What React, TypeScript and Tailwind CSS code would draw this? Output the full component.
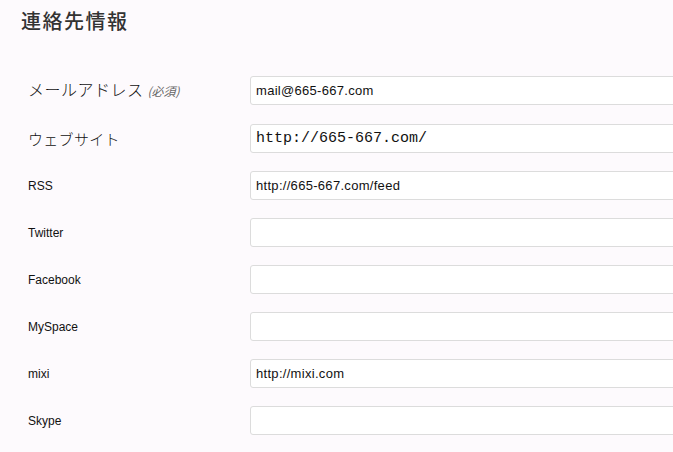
import React from "react";

type Field = {
  label: string;
  note?: string;
  big?: boolean;
  value?: string;
  mono?: boolean;
};

const FIELDS: Field[] = [
  { label: "メールアドレス", note: "(必須)", big: true, value: "mail@665-667.com" },
  { label: "ウェブサイト", big: true, value: "http://665-667.com/", mono: true },
  { label: "RSS", value: "http://665-667.com/feed" },
  { label: "Twitter" },
  { label: "Facebook" },
  { label: "MySpace" },
  { label: "mixi", value: "http://mixi.com" },
  { label: "Skype" },
];

export default function App() {
  return (
    <div className="min-h-screen w-full overflow-hidden bg-[#fdfafd] font-['Liberation_Sans','Noto_Sans_CJK_JP',sans-serif] text-[#222]">
      <h2 className="pl-[21px] pt-[8px] text-[20px] leading-[26px] font-medium text-[#333] tracking-[1.5px] font-['Noto_Sans_CJK_JP',sans-serif]">
        連絡先情報
      </h2>

      <div className="mt-[33px] pl-[28px] flex flex-col">
        {FIELDS.map((f, i) => (
          <div
            key={f.label}
            className={`flex items-center shrink-0 ${i === 1 ? "h-[48px]" : "h-[47px]"}`}
          >
            <div className="w-[222px] shrink-0 flex items-baseline">
              {f.big ? (
                <span
                  className={`${
                    f.note ? "text-[16px] tracking-[0.5px]" : "text-[15px] tracking-[0.3px]"
                  } leading-none font-light font-['Noto_Sans_CJK_JP',sans-serif] text-[#111]`}
                >
                  {f.label}
                </span>
              ) : (
                <span className="text-[12px] leading-none text-[#111]">{f.label}</span>
              )}
              {f.note && (
                <span className="ml-[4px] text-[12px] italic text-[#666] font-['Noto_Sans_CJK_JP',sans-serif]">
                  {f.note}
                </span>
              )}
            </div>
            <input
              type="text"
              readOnly
              defaultValue={f.value ?? ""}
              className={`w-[500px] h-[29px] shrink-0 rounded-[3px] border border-[#dcdcdc] bg-white px-[5px] outline-none ${
                f.mono
                  ? "text-[15px] font-['Liberation_Mono',monospace] text-[#111]"
                  : "text-[13px] tracking-[0.3px] font-['Liberation_Sans',sans-serif] text-[#111]"
              }`}
            />
          </div>
        ))}
      </div>
    </div>
  );
}
